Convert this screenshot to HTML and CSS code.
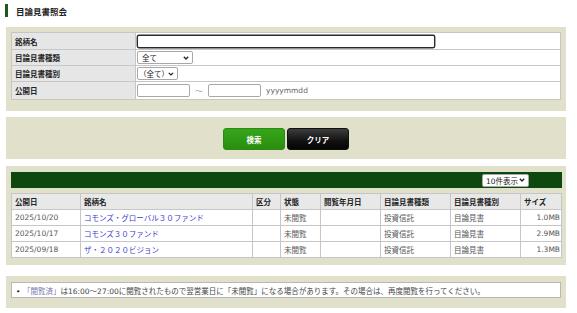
FILE: index.html
```html
<!DOCTYPE html>
<html lang="ja">
<head>
<meta charset="utf-8">
<link rel="stylesheet" href="styles.css">
</head>
<body>
<div class="page">
  <h1 class="title">目論見書照会</h1>

  <section class="panel search">
    <table class="form">
      <tr class="r1">
        <th>銘柄名</th>
        <td><span class="input name"></span></td>
      </tr>
      <tr class="r2">
        <th>目論見書種類</th>
        <td><span class="select s1"><span>全て</span><svg width="6" height="4" viewBox="0 0 6 4"><path d="M0.8 0.8 L3 3 L5.2 0.8" fill="none" stroke="#222" stroke-width="1.3"/></svg></span></td>
      </tr>
      <tr class="r3">
        <th>目論見書種別</th>
        <td><span class="select s2"><span>（全て）</span><svg width="6" height="4" viewBox="0 0 6 4"><path d="M0.8 0.8 L3 3 L5.2 0.8" fill="none" stroke="#222" stroke-width="1.3"/></svg></span></td>
      </tr>
      <tr class="r4">
        <th>公開日</th>
        <td>
          <div class="dates">
            <span class="input date"></span>
            <span class="tilde">～</span>
            <span class="input date"></span>
            <span class="hint">yyyymmdd</span>
          </div>
        </td>
      </tr>
    </table>
  </section>

  <section class="panel buttons">
    <button class="btn green">検索</button>
    <button class="btn black">クリア</button>
  </section>

  <section class="panel results">
    <div class="bar">
      <span class="select s3"><span>10件表示</span><svg width="6" height="4" viewBox="0 0 6 4"><path d="M0.8 0.8 L3 3 L5.2 0.8" fill="none" stroke="#222" stroke-width="1.3"/></svg></span>
    </div>
    <table class="list">
      <colgroup>
        <col style="width:69px"><col style="width:172px"><col style="width:28px"><col style="width:40px"><col style="width:60px"><col style="width:70px"><col style="width:70px"><col style="width:41px">
      </colgroup>
      <tr>
        <th>公開日</th><th>銘柄名</th><th>区分</th><th>状態</th><th>閲覧年月日</th><th>目論見書種類</th><th>目論見書種別</th><th>サイズ</th>
      </tr>
      <tr>
        <td>2025/10/20</td><td><a href="#">コモンズ・グローバル３０ファンド</a></td><td></td><td>未閲覧</td><td></td><td>投資信託</td><td>目論見書</td><td class="num">1.0MB</td>
      </tr>
      <tr>
        <td>2025/10/17</td><td><a href="#">コモンズ３０ファンド</a></td><td></td><td>未閲覧</td><td></td><td>投資信託</td><td>目論見書</td><td class="num">2.9MB</td>
      </tr>
      <tr>
        <td>2025/09/18</td><td><a href="#">ザ・２０２０ビジョン</a></td><td></td><td>未閲覧</td><td></td><td>投資信託</td><td>目論見書</td><td class="num">1.3MB</td>
      </tr>
    </table>
  </section>

  <section class="panel note">
    <ul>
      <li><span class="hl">「閲覧済」</span>は16:00～27:00に閲覧されたもので翌営業日に「未閲覧」になる場合があります。その場合は、再度閲覧を行ってください。</li>
    </ul>
  </section>
</div>
</body>
</html>
```

FILE: styles.css
```css
* { box-sizing: border-box; }
html, body { margin: 0; padding: 0; background: #fff; }
body {
  font-family: "DejaVu Sans", "Noto Sans CJK JP", sans-serif;
  font-size: 7.5px;
  color: #444;
}
.page {
  width: 560px;
  margin-left: 6px;
  padding-top: 4px;
}
.title {
  margin: 0 0 10px -1px;
  height: 13px;
  display: flex;
  align-items: center;
  border-left: 3px solid #1b5a1b;
  padding-left: 8px;
  font-size: 8.5px;
  font-weight: bold;
  color: #222;
}
.panel {
  background: #e1e1cb;
  padding: 5px;
}
.search { padding-top: 5px; padding-bottom: 11px; margin-bottom: 6px; }
table { border-collapse: collapse; width: 100%; }
.form { border: 1px solid #bdbdb0; }
.form th, .form td {
  border: 1px solid #c6c6c6;
  padding: 0 2px 0 1px;
  vertical-align: middle;
}
.form th {
  width: 124px;
  background: #e6e6e6;
  text-align: left;
  font-weight: bold;
  color: #222;
  padding-left: 3px;
}
.form td { background: #fff; }
.r1 th, .r1 td { height: 17px; }
.r2 th, .r2 td { height: 16px; }
.r3 th, .r3 td { height: 16px; }
.r4 th, .r4 td { height: 18px; }
.input {
  display: block;
  height: 13px;
  background: #fff;
  border: 1px solid #a8a8a8;
  border-radius: 2px;
}
.input.name {
  width: 298px;
  border: 1px solid #2a2a2a;
  box-shadow: 0 0 0 0.4px #2a2a2a;
}
.select {
  display: inline-flex;
  align-items: center;
  justify-content: space-between;
  height: 13px;
  padding: 0 3px 0 4px;
  background: #fff;
  border: 1px solid #a8a8a8;
  border-radius: 2px;
  color: #222;
  vertical-align: middle;
}
.select svg { display: block; }
.s1 { width: 56px; }
.s2 { width: 41px; padding-left: 1px; }
.s3 { width: 47px; height: 13px; padding-left: 3px; }
.dates { display: flex; align-items: center; }
.date { width: 53px; }
.tilde { width: 18px; text-align: center; color: #888; }
.hint { margin-left: 5px; color: #666; }

.buttons {
  display: flex;
  justify-content: center;
  gap: 2px;
  padding: 11px 5px 9px;
  margin-bottom: 7px;
}
.btn {
  width: 62px;
  height: 22px;
  border-radius: 3px;
  font-family: inherit;
  font-size: 7.5px;
  font-weight: bold;
  color: #fff;
  padding: 0;
  cursor: pointer;
}
.green {
  background: linear-gradient(#36a51a, #2a8e0f);
  border: 1px solid #2a8a12;
}
.black {
  background: linear-gradient(#3d3d3d, #111 60%, #050505);
  border: 1px solid #111;
}

.results { padding: 6px 5px 7px; margin-bottom: 11px; }
.bar {
  height: 16px;
  background: #0e480e;
  display: flex;
  align-items: center;
  justify-content: flex-end;
  padding-right: 33px;
  margin: 0 -1px 5px 0;
}
.list { table-layout: fixed; border: 1px solid #c0c0c0; }
.list th, .list td {
  border: 1px solid #c6c6c6;
  height: 16px;
  padding: 0 3px;
  text-align: left;
  vertical-align: middle;
  white-space: nowrap;
  overflow: hidden;
}
.list th {
  background: #e8e8e8;
  font-weight: bold;
  color: #222;
}
.list td { background: #fff; color: #555; }
.list td.num { text-align: right; padding-right: 1px; }
.list a { color: #3a3ad0; text-decoration: none; }

.note { padding: 6px 5px 10px; }
.note ul {
  margin: 0;
  padding: 0 0 0 4px;
  background: #fff;
  border: 1px solid #b8b8b8;
  height: 16px;
  display: flex;
  align-items: center;
  list-style: none;
}
.note li { color: #444; }
.note li::before {
  content: "•";
  color: #222;
  display: inline-block;
  width: 7px;
}
.hl { color: #7878a8; }
```
